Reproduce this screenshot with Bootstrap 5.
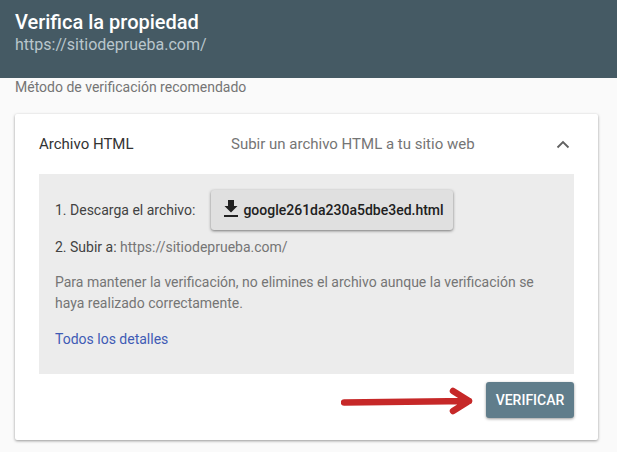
<!DOCTYPE html>
<html lang="es">
<head>
<meta charset="utf-8">
<title>Verifica la propiedad</title>
<link rel="stylesheet" href="https://cdn.jsdelivr.net/npm/bootstrap@5.3.0/dist/css/bootstrap.min.css">
<style>
html,body{height:452px;overflow:hidden}
body{background:#fafafa;font-family:Roboto,"Liberation Sans",sans-serif;font-size:14px;color:#757575}
.hdr{background:#455a64;height:78px;padding:10px 15px 0;color:#fff}
.hdr-title{font-size:20px;font-weight:500;line-height:24px;color:#fff;margin:0}
.hdr-url{font-size:16px;line-height:22px;color:#b9c6cc}
.sub{font-size:14px;line-height:20px;padding:0 15px;color:#757575;margin-top:-1px}
.vcard{margin:17px 19px 0 15px;height:326px;background:#fff;border:0;border-radius:2px;box-shadow:0 1px 3px rgba(0,0,0,.4);padding:0 24px}
.vhead{height:60px;color:#757575}
.vhead-name{width:192px;color:#333;font-size:15px}
.vhead-desc{font-size:15px;color:#757575}
.panel{height:200px;background:#ececec;padding:16px 16px 0}
.dl-btn{width:242px;height:40px;background:#e0e0e0;border:0;border-radius:3px;box-shadow:0 1px 3px rgba(0,0,0,.5);color:#212121;font-size:14px;font-weight:500;margin-left:16px;padding:0 0 0 12px}
.dl-ico{margin-bottom:3px}
.step{color:#424242;font-size:14px}
.step2{margin-top:8px;line-height:18px}
.muted-url{color:#757575}
.note{margin:16px 0 0;line-height:21px;color:#757575;font-size:14px}
.more{display:block;margin-top:15px;color:#3f5bb5;text-decoration:none;line-height:20px}
.vfoot{height:44px;padding-top:8px}
.go-btn{width:88px;height:36px;background:#607d8b;border:0;border-radius:3px;box-shadow:0 1px 3px rgba(0,0,0,.4);color:#fff;font-size:14px;font-weight:500;padding:0}
.arrow{margin-right:13px;margin-top:1px}
</style>
</head>
<body>
<header class="hdr">
  <h1 class="hdr-title">Verifica la propiedad</h1>
  <div class="hdr-url">https://sitiodeprueba.com/</div>
</header>
<div class="sub">Método de verificación recomendado</div>
<section class="vcard">
  <div class="vhead d-flex align-items-center">
    <div class="vhead-name">Archivo HTML</div>
    <div class="vhead-desc flex-grow-1">Subir un archivo HTML a tu sitio web</div>
    <svg width="14" height="9" viewBox="0 0 14 9" class="me-1"><path d="M1.5 7.5 7 2l5.5 5.5" fill="none" stroke="#616161" stroke-width="1.8"/></svg>
  </div>
  <div class="panel">
    <div class="d-flex align-items-center">
      <span class="step">1. Descarga el archivo:</span>
      <button type="button" class="btn dl-btn d-flex align-items-center gap-1">
        <svg class="dl-ico" width="16" height="17" viewBox="0 0 16 17"><path d="M5 0h6v6h3.500L8 12.500 1.500 6H5zM1 15h14v2H1z" fill="#212121"/></svg>
        <span>google261da230a5dbe3ed.html</span>
      </button>
    </div>
    <div class="step step2">2. Subir a: <span class="muted-url">https://sitiodeprueba.com/</span></div>
    <p class="note">Para mantener la verificación, no elimines el archivo aunque la verificación se haya realizado correctamente.</p>
    <a class="more" href="#">Todos los detalles</a>
  </div>
  <div class="vfoot d-flex justify-content-end align-items-start">
    <svg class="arrow" width="132" height="34" viewBox="0 0 132 34"><path d="M3 19.500 128 18M112 8l16 10-16 10" fill="none" stroke="#c62828" stroke-width="6.500" stroke-linecap="round" stroke-linejoin="round"/></svg>
    <button type="button" class="btn go-btn">VERIFICAR</button>
  </div>
</section>
<script src="https://cdn.jsdelivr.net/npm/bootstrap@5.3.0/dist/js/bootstrap.bundle.min.js"></script>
</body>
</html>
